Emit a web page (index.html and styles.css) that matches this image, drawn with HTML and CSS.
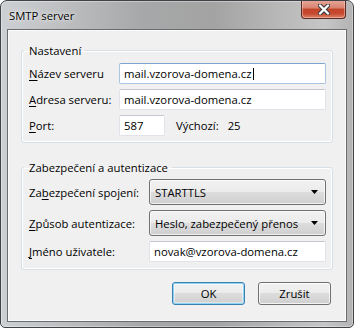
FILE: index.html
```html
<!DOCTYPE html>
<html lang="cs">
<head>
<meta charset="utf-8">
<title>SMTP server</title>
<link rel="stylesheet" href="styles.css">
</head>
<body>
<div class="window">
  <div class="titlebar">
    <span class="title">SMTP server</span>
    <div class="close">
      <svg width="12" height="11" viewBox="0 0 12 11">
        <path d="M2 1.5 L10 9.5 M10 1.5 L2 9.5" stroke="#3a3a3a" stroke-width="4.4" stroke-linecap="round" fill="none"/>
        <path d="M2 1.5 L10 9.5 M10 1.5 L2 9.5" stroke="#ffffff" stroke-width="2.4" stroke-linecap="round" fill="none"/>
      </svg>
    </div>
  </div>
  <div class="client">
    <fieldset class="group g1">
      <legend><span>Nastavení</span></legend>
      <div class="rows rows1">
        <label class="lbl"><u>N</u>ázev serveru</label>
        <div class="field focus">mail.vzorova-domena.cz<span class="caret"></span></div>
        <label class="lbl"><u>A</u>dresa serveru:</label>
        <div class="field">mail.vzorova-domena.cz</div>
        <label class="lbl"><u>P</u>ort:</label>
        <div class="portrow">
          <div class="field port">587</div>
          <span class="def">Výchozí:</span>
          <span class="defval">25</span>
        </div>
      </div>
    </fieldset>
    <fieldset class="group g2">
      <legend><span>Zabezpečení a autentizace</span></legend>
      <div class="rows rows2">
        <label class="lbl">Za<u>b</u>ezpečení spojení:</label>
        <div class="combo"><span>STARTTLS</span><svg class="arrow" width="7" height="4" viewBox="0 0 7 4"><path d="M0 0H7L3.5 4Z" fill="#000"/></svg></div>
        <label class="lbl"><u>Z</u>působ autentizace:</label>
        <div class="combo"><span>Heslo, zabezpečený přenos</span><svg class="arrow" width="7" height="4" viewBox="0 0 7 4"><path d="M0 0H7L3.5 4Z" fill="#000"/></svg></div>
        <label class="lbl"><u>J</u>méno uživatele:</label>
        <div class="field">novak@vzorova-domena.cz</div>
      </div>
    </fieldset>
    <div class="buttons">
      <div class="btn default">OK</div>
      <div class="btn">Zrušit</div>
    </div>
  </div>
</div>
</body>
</html>
```
FILE: styles.css
```css
html, body {
  margin: 0;
  padding: 0;
  background: #ffffff;
}

body {
  font-family: "Open Sans", "Noto Sans", sans-serif;
  font-size: 11.3px;
  line-height: 15px;
  color: #000;
}

.window {
  width: 354px;
  height: 328px;
  box-sizing: border-box;
  border: 1px solid #3f4246;
  border-radius: 7px 7px 5px 5px;
  background: linear-gradient(90deg, #cdd0d3 0%, #bfc1c3 15%, #a7a8a9 40%, #a3a3a3 60%, #b9b9b9 80%, #c6c6c6 92%, #b3b3b3 100%);
  box-shadow: inset 0 0 0 1px rgba(255, 255, 255, 0.35);
  padding: 0 6px 5px 6px;
  display: flex;
  flex-direction: column;
  overflow: hidden;
}

.titlebar {
  height: 28px;
  display: flex;
  align-items: center;
  flex: none;
}

.title {
  padding-left: 2px;
  color: #000;
  text-shadow: 0 0 6px rgba(255, 255, 255, 0.9), 0 0 2px rgba(255, 255, 255, 0.8);
}

.close {
  margin-left: auto;
  margin-right: 1px;
  align-self: flex-start;
  margin-top: -1px;
  width: 45px;
  height: 19px;
  box-sizing: border-box;
  border: 1px solid #5b2a22;
  border-top: none;
  border-radius: 0 0 4px 4px;
  background: linear-gradient(180deg, #e9a99a 0%, #d8826e 45%, #c2452b 50%, #c74a2f 75%, #dd8266 100%);
  box-shadow: inset 0 0 0 1px rgba(255, 220, 210, 0.45);
  display: flex;
  align-items: center;
  justify-content: center;
}

.client {
  flex: 1;
  border: 1px solid #6a6d70;
  background: #f0f0f0;
  box-shadow: inset 0 0 0 1px #fbfbfb;
  display: flex;
  flex-direction: column;
}

.group {
  margin: 13px 13px 0 13px;
  padding: 5px 0 6px 7px;
  border: 1px solid #d5dfe5;
  border-radius: 3px;
  box-shadow: inset 0 0 0 1px #ffffff;
  min-width: 0;
}

.group legend {
  margin-left: -5px;
  padding: 0 4px 0 5px;
  line-height: 15px;
}

.g2 {
  margin-top: 17px;
  padding-top: 4px;
  padding-bottom: 7px;
}

.rows {
  display: grid;
  row-gap: 5px;
  align-items: center;
}

.rows1 {
  grid-template-columns: 90px 207px;
  grid-auto-rows: 21px;
}

.rows2 {
  grid-template-columns: 120px 177px;
  grid-template-rows: 26px 26px 21px;
}

.lbl u {
  text-decoration: underline;
  text-underline-offset: 2px;
  text-decoration-thickness: 1px;
}

.field {
  height: 21px;
  box-sizing: border-box;
  border: 1px solid #e2e3ea;
  border-top-color: #c6c9d1;
  border-radius: 2px;
  background: #ffffff;
  padding: 0 4px;
  display: flex;
  align-items: center;
  white-space: nowrap;
}

.field.focus {
  border-color: #a9c5e3;
  border-top-color: #7ea5cf;
}

.caret {
  display: inline-block;
  width: 1px;
  height: 12px;
  background: #000;
  margin-left: 1px;
}

.portrow {
  display: flex;
  align-items: center;
  height: 21px;
}

.field.port {
  width: 46px;
}

.def {
  margin-left: 11px;
}

.defval {
  margin-left: 9px;
}

.combo {
  height: 26px;
  box-sizing: border-box;
  border: 1px solid #707070;
  border-radius: 3px;
  background: linear-gradient(180deg, #f2f2f2 0%, #ebebeb 49%, #dddddd 50%, #cfcfcf 100%);
  box-shadow: inset 0 0 0 1px rgba(255, 255, 255, 0.7);
  padding: 0 7px 0 5px;
  display: flex;
  align-items: center;
  justify-content: space-between;
  white-space: nowrap;
}

.buttons {
  display: flex;
  justify-content: flex-end;
  gap: 13px;
  margin-top: 12px;
  padding-right: 15px;
}

.btn {
  width: 73px;
  height: 23px;
  box-sizing: border-box;
  border: 1px solid #707070;
  border-radius: 3px;
  background: linear-gradient(180deg, #f2f2f2 0%, #ebebeb 49%, #dddddd 50%, #cfcfcf 100%);
  box-shadow: inset 0 0 0 1px rgba(255, 255, 255, 0.75);
  display: flex;
  align-items: center;
  justify-content: center;
}

.btn.default {
  border-color: #3c7fb1;
  box-shadow: inset 0 0 0 1px #8ed4f3, inset 0 0 0 2px rgba(255, 255, 255, 0.4);
}
```
